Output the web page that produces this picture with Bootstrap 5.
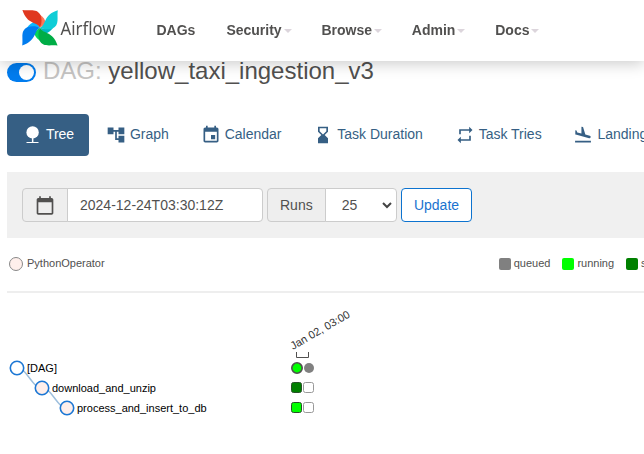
<!DOCTYPE html>
<html lang="en">
<head>
<meta charset="utf-8">
<meta name="viewport" content="width=device-width, initial-scale=1">
<title>yellow_taxi_ingestion_v3 - Tree - Airflow</title>
<link href="https://cdn.jsdelivr.net/npm/bootstrap@5.3.0/dist/css/bootstrap.min.css" rel="stylesheet">
<style>
body{font-family:"Liberation Sans",Arial,sans-serif;font-size:14px;line-height:20px;color:#51504f;background:#fff;overflow:hidden;height:454px}
.topbar{height:61px;background:#fff;box-shadow:0 3px 14px rgba(0,0,0,.2)}
.brand{width:120px;height:61px;margin-left:21px}
.topbar .nav{margin-bottom:2px}
.topbar .nav-link{font-weight:700;color:#51504f;padding:0 15.5px}
.tri{display:inline-block;border:4px solid transparent;border-top-color:#dcd5dc;border-bottom:0;margin-left:2px;margin-right:-1.2px;vertical-align:2px}
.page{padding:57px 0 0 7px}
.title{font-size:24px;line-height:28px;font-weight:400}
.title .kind{color:#c5c4c3}
.toggle{width:29px;height:19px;border-radius:10px;background:#017cee;margin-top:2px;margin-right:7px;padding:2px}
.knob{width:15px;height:15px;background:#fff}
.views{margin-top:29px;gap:2px;width:900px}
.views .nav-link{padding:0 14.9px;height:42px;color:#365f84;border-radius:4px;gap:4px}
.views .nav-link span{margin-bottom:2px}
.views .nav-link.active{background:#365f84;color:#fff}
.views svg{width:20px;height:20px;fill:currentColor}
.filters{height:66px;margin-top:16px;padding:0 15px;background:#f0f0f0;gap:4px}
.filters .input-group-text,.filters .form-control,.filters .form-select{height:34px;font-size:14px;line-height:20px;border-color:#ccc;color:#51504f;border-radius:4px}
.filters .input-group-text{background:#eee;padding:0 12px}
.date-group{width:241px}
.date-group .input-group-text{width:46px}
.runs-group{width:130px}
.filters .form-select{padding:0 16px;background-image:url("data:image/svg+xml,%3Csvg xmlns='http://www.w3.org/2000/svg' viewBox='0 0 10 7'%3E%3Cpath d='M1 1l4 4 4-4' fill='none' stroke='%23444' stroke-width='2'/%3E%3C/svg%3E");background-size:10px 7px;background-position:right 4px center}
.btn-update{height:34px;width:71px;font-size:14px;padding:0;border:1px solid #0d73cf;color:#1a73cf;background:#fff;border-radius:4px}
.legend{height:55px;padding-bottom:2px;font-size:11px;width:800px;border-bottom:2px solid #eee}
.legend .label-text{margin-bottom:1px}
.operator-dot{width:14px;height:14px;border:1px solid #888;background:#ffefeb;margin-left:2px;margin-right:4px}
.states{margin-left:394px;gap:12px}
.swatch{width:12px;height:12px;border-radius:2px;margin-right:3px}
.tree-chart{display:block;margin-left:-7px;font-size:11px;fill:#000}
</style>
<script src="https://cdn.jsdelivr.net/npm/bootstrap@5.3.0/dist/js/bootstrap.bundle.min.js"></script>
</head>
<body>
<nav class="topbar fixed-top d-flex align-items-center">
  <svg class="brand flex-shrink-0" viewBox="21 0 120 61" role="img" aria-label="Airflow">
    <defs>
      <path id="blade" d="M-17.6 -17.8C-10 -16.7 -3 -20 .6 -12.5C2.2 -8 1.5 -3 0 0C-3 -6.5 -13 -3 -17.6 -17.8Z"/>
      <path id="fold" d="M-.3 -13.3C3.5 -10.5 5.5 -8 5.5 -5C4 -3 2 -1 0 0C1 -4 1.5 -8 -.3 -13.3Z"/>
    </defs>
    <g transform="translate(40 27.8)">
      <use href="#fold" fill="#ff7557"/><use href="#fold" fill="#00b7c4" transform="rotate(90)"/>
      <use href="#fold" fill="#04d659" transform="rotate(180)"/><use href="#fold" fill="#0cb6ff" transform="rotate(270)"/>
      <use href="#blade" fill="#e0381f"/><use href="#blade" fill="#0fcdd6" transform="rotate(90)"/>
      <use href="#blade" fill="#00ad46" transform="rotate(180)"/><use href="#blade" fill="#017cee" transform="rotate(270)"/>
    </g>
    <text x="60.5" y="34.5" font-family="Noto Sans,sans-serif" font-size="17.5" textLength="55" lengthAdjust="spacingAndGlyphs" fill="#51504f">Airflow</text>
  </svg>
  <ul class="nav flex-nowrap">
    <li><a class="nav-link" href="#">DAGs</a></li>
    <li><a class="nav-link" href="#">Security<span class="tri"></span></a></li>
    <li><a class="nav-link" href="#">Browse<span class="tri"></span></a></li>
    <li><a class="nav-link" href="#">Admin<span class="tri"></span></a></li>
    <li><a class="nav-link" href="#">Docs<span class="tri"></span></a></li>
  </ul>
</nav>
<main class="page">
  <div class="d-flex align-items-center">
    <div class="toggle d-flex justify-content-end align-items-center"><span class="knob rounded-circle"></span></div>
    <h1 class="title m-0 text-nowrap"><span class="kind">DAG:</span> yellow_taxi_ingestion_v3</h1>
  </div>
  <ul class="nav views flex-nowrap text-nowrap">
    <li><a class="nav-link active d-flex align-items-center" href="#"><svg viewBox="0 0 20 20"><circle cx="10.6" cy="7.4" r="6.2"/><path d="M9.9 12h1.5v4.9h5.1v1.2h-12v-1.2h5.4z"/></svg><span>Tree</span></a></li>
    <li><a class="nav-link d-flex align-items-center" href="#"><svg viewBox="0 0 24 24"><path d="M22 11V3h-7v3H9V3H2v8h7V8h2v10h4v3h7v-8h-7v3h-2V8h2v3z"/></svg><span>Graph</span></a></li>
    <li><a class="nav-link d-flex align-items-center" href="#"><svg viewBox="0 0 24 24"><path d="M17 12h-5v5h5v-5zM16 1v2H8V1H6v2H5c-1.11 0-1.99.9-1.99 2L3 19c0 1.1.89 2 2 2h14c1.1 0 2-.9 2-2V5c0-1.1-.9-2-2-2h-1V1h-2zm3 18H5V8h14v11z"/></svg><span>Calendar</span></a></li>
    <li><a class="nav-link d-flex align-items-center" href="#"><svg viewBox="0 0 24 24"><path d="M6 2v6h.01L6 8.01 10 12l-4 4 .01.01H6V22h12v-5.99h-.01L18 16l-4-4 4-3.99-.01-.01H18V2H6zm10 5.5l-4 4-4-4V4h8v3.5z"/></svg><span>Task Duration</span></a></li>
    <li><a class="nav-link d-flex align-items-center" href="#"><svg viewBox="0 0 24 24"><path d="M7 7h10v3l4-4-4-4v3H5v6h2V7zm10 10H7v-3l-4 4 4 4v-3h12v-6h-2v4z"/></svg><span>Task Tries</span></a></li>
    <li><a class="nav-link d-flex align-items-center" href="#"><svg viewBox="0 0 24 24"><path d="M2.5 19h19v2h-19zM9.68 13.27l4.35 1.16 5.31 1.42c.8.21 1.62-.26 1.84-1.06.21-.8-.26-1.62-1.06-1.84l-5.31-1.42-2.76-9.02L10.12 2v8.28L5.15 8.95l-.93-2.32-1.45-.39v5.17l1.6.43z"/></svg><span>Landing Times</span></a></li>
  </ul>
  <form class="filters d-flex align-items-center">
    <div class="input-group date-group flex-nowrap">
      <span class="input-group-text"><svg width="21" height="21" viewBox="0 0 24 24" fill="#51504f"><path d="M20 3h-1V1h-2v2H7V1H5v2H4c-1.1 0-2 .9-2 2v16c0 1.1.9 2 2 2h16c1.1 0 2-.9 2-2V5c0-1.1-.9-2-2-2zm0 18H4V8h16v13z"/></svg></span>
      <input class="form-control" value="2024-12-24T03:30:12Z" aria-label="Base date">
    </div>
    <div class="input-group runs-group flex-nowrap">
      <span class="input-group-text">Runs</span>
      <select class="form-select" aria-label="Runs"><option>25</option></select>
    </div>
    <button type="button" class="btn btn-update">Update</button>
  </form>
  <div class="legend d-flex align-items-center text-nowrap">
    <span class="operator-dot rounded-circle"></span><span class="label-text">PythonOperator</span>
    <div class="states d-flex">
      <span class="d-flex align-items-center"><span class="swatch" style="background:gray"></span><span class="label-text">queued</span></span>
      <span class="d-flex align-items-center"><span class="swatch" style="background:lime"></span><span class="label-text">running</span></span>
      <span class="d-flex align-items-center"><span class="swatch" style="background:green"></span><span class="label-text">success</span></span>
    </div>
  </div>
  <svg class="tree-chart" width="644" height="161" viewBox="0 293 644 161">
    <g fill="none" stroke="#9ebfdd" stroke-width="1.5"><path d="M17 368C27 368 32 388 42 388M42 388C52 388 57 408 67 408"/></g>
    <g stroke="#1c77d4" stroke-width="1.6"><circle cx="17" cy="368" r="6.7" fill="#fff"/><circle cx="42" cy="388" r="6.7" fill="#ffefeb"/><circle cx="67" cy="408" r="6.7" fill="#ffefeb"/></g>
    <text x="27" y="372">[DAG]</text><text x="52" y="392">download_and_unzip</text><text x="77" y="412">process_and_insert_to_db</text>
    <text transform="translate(293 350) rotate(-30)" fill="#333">Jan 02, 03:00</text>
    <path d="M296.5 352v5.5h12V352" fill="none" stroke="#51504f"/>
    <circle cx="297" cy="368" r="5.2" fill="lime" stroke="#51504f" stroke-width="1.6"/><circle cx="309" cy="368" r="5" fill="gray"/>
    <g stroke-width="1"><rect x="291.5" y="382.5" width="10" height="10" rx="2" fill="green" stroke="#285028"/><rect x="303.5" y="382.5" width="10" height="10" rx="2" fill="#fff" stroke="#999"/>
    <rect x="291.5" y="402.5" width="10" height="10" rx="2" fill="lime" stroke="#285028"/><rect x="303.5" y="402.5" width="10" height="10" rx="2" fill="#fff" stroke="#999"/></g>
  </svg>
</main>
</body>
</html>
